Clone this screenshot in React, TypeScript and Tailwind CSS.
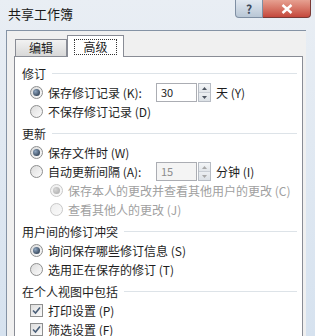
import type { ReactNode } from "react";

const font = {
  fontFamily: '"Noto Sans CJK SC", "Noto Sans", sans-serif',
};

function Radio({ checked, disabled }: { checked?: boolean; disabled?: boolean }) {
  return (
    <span
      className={
        "relative flex h-[13px] w-[13px] shrink-0 items-center justify-center rounded-full border " +
        (disabled
          ? "border-[#c8c8c8] bg-gradient-to-br from-[#eeeeee] to-[#fafafa]"
          : "border-[#8e8f8f] bg-gradient-to-br from-[#dcdcdc] to-[#fbfbfb]")
      }
    >
      {checked && (
        <span
          className={
            "h-[7px] w-[7px] rounded-full " +
            (disabled
              ? "bg-[radial-gradient(circle_at_35%_35%,#d6d6d6,#a8a8a8)]"
              : "bg-[radial-gradient(circle_at_35%_35%,#8fa6c0,#1b2a3c)]")
          }
        />
      )}
    </span>
  );
}

function Check() {
  return (
    <span className="flex h-[13px] w-[13px] shrink-0 items-center justify-center border border-[#8e8f8f] bg-gradient-to-br from-[#dedede] to-[#fafafa]">
      <svg width="9" height="9" viewBox="0 0 9 9">
        <path d="M1 4.5 L3.5 7 L8 1.5" fill="none" stroke="#4a5f78" strokeWidth="1.6" />
      </svg>
    </span>
  );
}

function Header({ children, first }: { children: ReactNode; first?: boolean }) {
  return (
    <div className={"flex h-[19px] items-center gap-[6px] " + (first ? "" : "mt-[3px]")}>
      <span className="text-[12px] leading-none text-[#1e1e1e]">{children}</span>
      <span className="h-px flex-1 bg-[#dde3e8]" />
    </div>
  );
}

function Row({
  children,
  indent = "pl-[8px]",
}: {
  children: ReactNode;
  indent?: string;
}) {
  return <div className={"flex h-[19px] items-center gap-[5px] " + indent}>{children}</div>;
}

function Label({
  children,
  disabled,
  width = "",
}: {
  children: ReactNode;
  disabled?: boolean;
  width?: string;
}) {
  return (
    <span
      className={
        "whitespace-nowrap text-[12px] leading-none " +
        width +
        " " +
        (disabled ? "text-[#a0a0a0]" : "text-[#1e1e1e]")
      }
    >
      {children}
    </span>
  );
}

function Spin({ value, disabled }: { value: string; disabled?: boolean }) {
  return (
    <div className="flex h-[19px] shrink-0 items-stretch">
      <div
        className={
          "flex w-[41px] items-center border border-[#abadb3] pl-[4px] text-[11px] " +
          (disabled ? "bg-[#f4f4f4] text-[#8d8d8d]" : "bg-white text-[#1e1e1e]")
        }
      >
        {value}
      </div>
      <div className="ml-[1px] flex w-[13px] flex-col border border-[#b7bcc4]">
        <div className="flex flex-1 items-center justify-center border-b border-[#c9ced5] bg-gradient-to-b from-[#f4f6f8] to-[#e2e6ea]">
          <svg width="5" height="3" viewBox="0 0 5 3">
            <path d="M0 3 L2.5 0 L5 3Z" fill={disabled ? "#a8a8a8" : "#4d5560"} />
          </svg>
        </div>
        <div className="flex flex-1 items-center justify-center bg-gradient-to-b from-[#eceff2] to-[#dce1e6]">
          <svg width="5" height="3" viewBox="0 0 5 3">
            <path d="M0 0 L2.5 3 L5 0Z" fill={disabled ? "#a8a8a8" : "#4d5560"} />
          </svg>
        </div>
      </div>
    </div>
  );
}

export default function App() {
  return (
    <div
      style={font}
      className="flex h-[336px] w-[315px] flex-col overflow-hidden bg-gradient-to-b from-[#e9eef4] to-[#d6e2ef]"
    >
      {/* title bar */}
      <div className="flex h-[30px] shrink-0 items-start">
        <div className="pl-[8px] pt-[7px] text-[13px] leading-none text-[#1b1b1b]">共享工作簿</div>
        <div className="ml-auto mr-[4px] flex h-[18px]">
          <div className="flex w-[28px] items-center justify-center rounded-bl-[4px] border border-t-0 border-[#7f8fa3] bg-gradient-to-b from-[#e1e8f0] to-[#b9c7d6] text-[12px] font-bold text-[#3c4a5c]">
            ?
          </div>
          <div className="flex w-[48px] items-center justify-center rounded-br-[4px] border border-l-0 border-t-0 border-[#7a3a36] bg-gradient-to-b from-[#e6a091] to-[#c4473c]">
            <svg width="12" height="10" viewBox="0 0 12 10">
              <path d="M1.5 1 L10.5 9 M10.5 1 L1.5 9" stroke="#ffffff" strokeWidth="2.4" />
            </svg>
          </div>
        </div>
      </div>

      {/* client */}
      <div className="ml-[6px] mr-[9px] flex flex-1 flex-col border-l border-t border-[#8593a5] bg-[#f0f0f0] pl-[7px] pr-[3px] pt-[4px]">
        {/* tabs */}
        <div className="relative z-10 flex h-[21px] items-end">
          <div className="ml-[1px] flex h-[17px] w-[52px] items-center justify-center border border-b-0 border-[#898c95] bg-gradient-to-b from-[#f2f2f2] to-[#d8d8d8] text-[12px] leading-none text-[#1e1e1e]">
            编辑
          </div>
          <div className="-mb-px flex h-[22px] w-[57px] items-center justify-center border border-b-0 border-[#898c95] bg-white">
            <span className="border border-dotted border-[#333] px-[8px] py-[1px] text-[12px] leading-none text-[#1e1e1e]">
              高级
            </span>
          </div>
        </div>

        {/* panel */}
        <div className="flex flex-1 flex-col border border-[#898c95] bg-white pl-[7px] pr-[5px] pt-[7px]">
          <Header first>修订</Header>
          <Row>
            <Radio checked />
            <Label width="w-[103px]">保存修订记录 (K):</Label>
            <Spin value="30" />
            <Label>天 (Y)</Label>
          </Row>
          <Row>
            <Radio />
            <Label>不保存修订记录 (D)</Label>
          </Row>

          <Header>更新</Header>
          <Row>
            <Radio checked />
            <Label>保存文件时 (W)</Label>
          </Row>
          <Row>
            <Radio />
            <Label width="w-[103px]">自动更新间隔 (A):</Label>
            <Spin value="15" disabled />
            <Label>分钟 (I)</Label>
          </Row>
          <Row indent="pl-[28px]">
            <Radio checked disabled />
            <Label disabled>保存本人的更改并查看其他用户的更改 (C)</Label>
          </Row>
          <Row indent="pl-[28px]">
            <Radio disabled />
            <Label disabled>查看其他人的更改 (J)</Label>
          </Row>

          <Header>用户间的修订冲突</Header>
          <Row>
            <Radio checked />
            <Label>询问保存哪些修订信息 (S)</Label>
          </Row>
          <Row>
            <Radio />
            <Label>选用正在保存的修订 (T)</Label>
          </Row>

          <Header>在个人视图中包括</Header>
          <Row>
            <Check />
            <Label>打印设置 (P)</Label>
          </Row>
          <Row>
            <Check />
            <Label>筛选设置 (F)</Label>
          </Row>
        </div>
      </div>
    </div>
  );
}
